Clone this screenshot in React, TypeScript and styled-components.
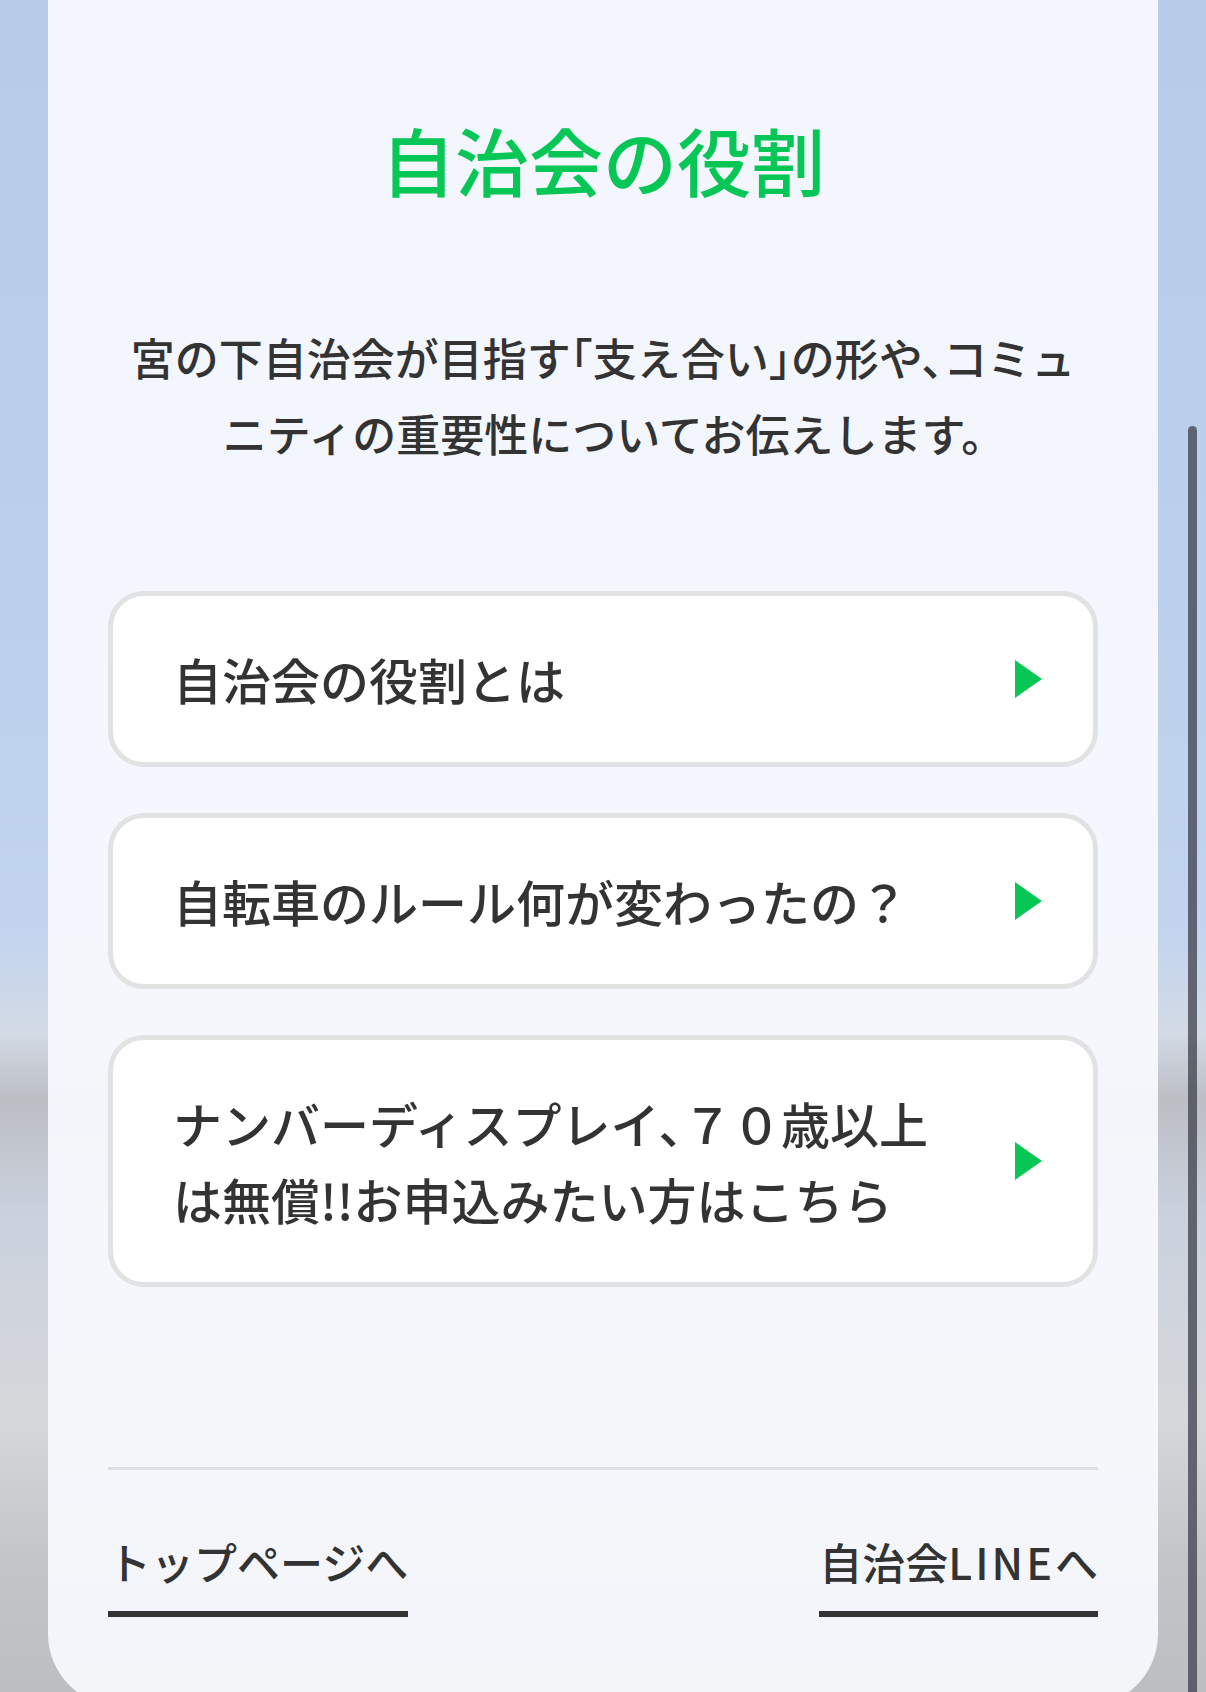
import styled, { createGlobalStyle } from "styled-components"

const GlobalStyle = createGlobalStyle`
	html, body {
		margin: 0;
		padding: 0;
	}
	body {
		font-family: "Noto Sans CJK JP", "Noto Sans", sans-serif;
		color: #333333;
	}
`

const Screen = styled.div`
	position: relative;
	width: 1206px;
	height: 1692px;
	overflow: hidden;
	background: linear-gradient(
		180deg,
		#b8cbe9 0%,
		#bccfec 35%,
		#c2d4ef 55%,
		#d3dae5 61%,
		#bcbec4 65%,
		#cbd2de 72%,
		#d6d7da 84%,
		#c4c5c9 92%,
		#bdbec2 100%
	);
`

const Card = styled.main`
	display: flex;
	flex-direction: column;
	align-items: stretch;
	box-sizing: border-box;
	margin: 0 48px;
	height: 1706px;
	padding: 108px 60px 0;
	background: rgba(248, 250, 254, 0.92);
	border-radius: 0 0 72px 72px;
`

const Titulo = styled.h1`
	margin: 0;
	text-align: center;
	font-size: 74px;
	line-height: 101px;
	font-weight: 500;
	color: #06c755;
`

const Descricao = styled.p`
	margin: 110px 0 0;
	padding: 0 10px;
	text-align: center;
	font-size: 44px;
	line-height: 76px;
	font-weight: 500;
	font-feature-settings: "halt";
	color: #333333;
`

const Lista = styled.div`
	display: flex;
	flex-direction: column;
	gap: 46px;
	margin-top: 120px;
`

const Botao = styled.a`
	display: flex;
	align-items: center;
	gap: 50px;
	padding: 45px 51px 45px 60px;
	background: #ffffff;
	border: 5px solid #e1e2e4;
	border-radius: 36px;
	text-decoration: none;
	cursor: pointer;
`

const TextoBotao = styled.span`
	flex: 1;
	font-size: 49px;
	line-height: 76px;
	font-weight: 500;
	font-feature-settings: "halt";
	color: #333333;
`

const Seta = styled.svg`
	flex: none;
	width: 27px;
	height: 38px;
`

const Linha = styled.hr`
	margin: 180px 0 0;
	border: none;
	height: 3px;
	background: #dde1e6;
`

const Rodape = styled.nav`
	display: flex;
	justify-content: space-between;
	align-items: flex-start;
	margin-top: 60px;
`

const LinkRodape = styled.a`
	display: inline-block;
	padding-bottom: 18px;
	border-bottom: 6px solid #333333;
	font-size: 43px;
	line-height: 63px;
	font-weight: 500;
	color: #333333;
	text-decoration: none;
`

const Latino = styled.span`
	letter-spacing: 0.07em;
`

const BarraRolagem = styled.div`
	position: absolute;
	right: 9px;
	top: 426px;
	bottom: 0;
	width: 9px;
	border-radius: 5px 5px 0 0;
	background: rgba(72, 76, 86, 0.82);
`

const itens = [
	{ id: 1, texto: "自治会の役割とは" },
	{ id: 2, texto: "自転車のルール何が変わったの？" },
	{ id: 3, texto: "ナンバーディスプレイ、７０歳以上は無償!!お申込みたい方はこちら" },
]

export default function App() {
	return (
		<Screen>
			<GlobalStyle />
			<Card>
				<Titulo>自治会の役割</Titulo>
				<Descricao>
					宮の下自治会が目指す「支え合い」の形や、コミュニティの重要性についてお伝えします。
				</Descricao>
				<Lista>
					{itens.map(item =>
						<Botao key={item.id}>
							<TextoBotao>{item.texto}</TextoBotao>
							<Seta viewBox="0 0 27 38">
								<polygon points="0,0 27,19 0,38" fill="#06c755" />
							</Seta>
						</Botao>
					)}
				</Lista>
				<Linha />
				<Rodape>
					<LinkRodape>トップページへ</LinkRodape>
					<LinkRodape>自治会<Latino>LINE</Latino>へ</LinkRodape>
				</Rodape>
			</Card>
			<BarraRolagem />
		</Screen>
	)
}
